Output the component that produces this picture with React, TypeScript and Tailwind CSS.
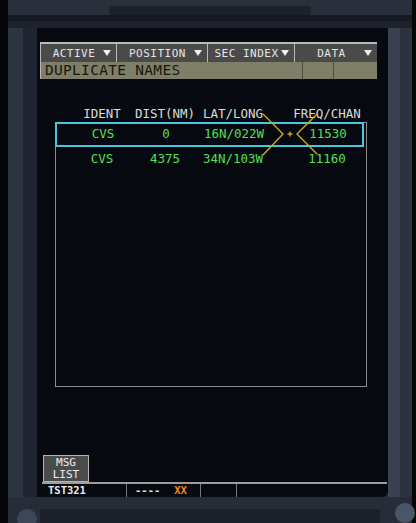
import React from 'react';

const mono = { fontFamily: '"DejaVu Sans Mono", "Liberation Mono", monospace' };

const tabs = [
  { label: 'ACTIVE', w: 'w-[76px]' },
  { label: 'POSITION', w: 'w-[91px]' },
  { label: 'SEC INDEX', w: 'w-[87px]' },
  { label: 'DATA', w: 'w-[83px]' },
];

const rows = [
  { ident: 'CVS', dist: '0', pos: '16N/022W', freq: '11530', active: true },
  { ident: 'CVS', dist: '4375', pos: '34N/103W', freq: '11160', active: false },
];

function Tab({ label, w }: { label: string; w: string }) {
  return (
    <div className={`${w} h-full flex items-center bg-[#4a4a4a] border-l border-t-2 border-[#b9b9b9] pl-1 pr-[5px]`}>
      <span className="flex-1 text-center text-[11px] tracking-[0.5px] text-[#e6e6e6] leading-none">{label}</span>
      <svg width="8" height="6" viewBox="0 0 8 6">
        <path d="M0 0 H8 L4 6 Z" fill="#f0f0f0" />
      </svg>
    </div>
  );
}

function Cells({ a, b, c, d, cls }: { a: string; b: string; c: string; d: string; cls: string }) {
  return (
    <div className={`flex items-center whitespace-nowrap ${cls}`}>
      <div className="w-[92px] flex justify-center">{a}</div>
      <div className="w-[34px] flex justify-center">{b}</div>
      <div className="w-[102px] flex justify-center">{c}</div>
      <div className="w-[86px] flex justify-center">{d}</div>
    </div>
  );
}

export default function App() {
  return (
    <div className="w-[416px] h-[523px] bg-black flex overflow-hidden" style={mono}>
      <div className="w-[8px] shrink-0 bg-[#050608]" />
      <div className="w-[404px] h-full relative bg-[#242b37] flex flex-col">
        {/* top bezel */}
        <div className="h-[28px] shrink-0 flex flex-col">
          <div className="h-[15px] bg-[#29303c] flex justify-center">
            <div className="w-[202px] mt-[6px] h-[9px] bg-[#1b2029] rounded-b-sm" />
          </div>
          <div className="h-[6px] bg-[#151a22]" />
          <div className="flex-1 bg-[#1d222c]" />
        </div>

        <div className="flex flex-1">
          {/* left bezel */}
          <div className="w-[15px] bg-[#2e3542]" />
          <div className="w-[14px] bg-[#1f2530]" />

          {/* screen */}
          <div className="w-[351px] h-[469px] relative bg-[#060910] flex flex-col rounded-br-md">
            <div className="mt-[14px] ml-[3px] w-[337px] h-[20px] flex bg-[#4a4a4a]">
              {tabs.map((t) => (
                <Tab key={t.label} label={t.label} w={t.w} />
              ))}
            </div>
            <div className="ml-[3px] w-[337px] h-[17px] flex bg-[#7f7e69] border-l border-[#b9b9b9]">
              <div className="w-[261px] pl-[4px] flex items-center text-[14.5px] leading-none text-[#16170f] tracking-[0.3px]">
                DUPLICATE NAMES
              </div>
              <div className="w-[32px] border-l border-r border-[#4e4d40]" />
              <div className="flex-1" />
            </div>

            <div className="ml-[19px] mt-[28px] text-[12.5px] leading-none">
              <Cells a="IDENT" b="DIST(NM)" c="LAT/LONG" d="FREQ/CHAN" cls="h-[14px] text-[#dcdcdc]" />
              <div className="mt-[1px] -ml-px w-[312px] h-[265px] border border-[#8c8c8c]">
                {rows.map((r) => (
                  <div
                    key={r.pos}
                    className={
                      r.active
                        ? 'h-[25px] -ml-px -mt-px w-[309px] border-2 border-[#47c6dc] flex items-center'
                        : 'h-[24px] flex items-center'
                    }
                  >
                    <Cells a={r.ident} b={r.dist} c={r.pos} d={r.freq} cls="text-[#52e052]" />
                  </div>
                ))}
              </div>
            </div>

            <div className="flex-1" />

            <div className="ml-[6px] w-[46px] h-[27px] bg-[#4b4b4b] border border-[#b4b4b4] flex flex-col items-center justify-center text-[11px] leading-[12px] text-[#ececec]">
              <span>MSG</span>
              <span>LIST</span>
            </div>
            <div className="ml-[5px] w-[345px] h-[2px] bg-[#9c9c9c]" />
            <div className="h-[13px] ml-[5px] flex items-center text-[10.5px] leading-none font-bold">
              <div className="w-[84px] pl-[6px] text-[#ededed]">TST321</div>
              <div className="w-[74px] h-full border-l border-[#777] flex items-center pl-[8px] gap-[14px]">
                <span className="text-[#e0e0e0]">----</span>
                <span className="text-[#f08c14]">XX</span>
              </div>
              <div className="w-[36px] h-full border-l border-[#777]" />
              <div className="h-full border-l border-[#777]" />
            </div>

            {/* intersection marker */}
            <svg className="absolute left-0 top-0" width="351" height="469" viewBox="37 28 351 469">
              <g stroke="#c9a820" strokeWidth="1.4" fill="none">
                <path d="M263 114 L283 134 L263 155" />
                <path d="M317 114 L297 134 L317 154" />
                <path d="M287.5 134 H292.5 M290 131.5 V136.5" />
              </g>
            </svg>
          </div>

          {/* right bezel */}
          <div className="w-[12px] bg-[#3a4150]" />
          <div className="w-[12px] bg-[#2c3240]" />
        </div>

        {/* bottom bezel */}
        <div className="h-[26px] shrink-0 bg-[#262c38] flex items-end relative">
          <div className="ml-[32px] w-[340px] h-[14px] bg-[#1c212b]" />
          <div className="absolute left-[9px] top-[12px] w-[20px] h-[20px] rounded-full bg-[#3d4656]" />
          <div className="absolute left-[387px] top-[6px] w-[20px] h-[20px] rounded-full bg-[#4a5567]" />
        </div>
      </div>
      <div className="w-[4px] bg-[#050608]" />
    </div>
  );
}
